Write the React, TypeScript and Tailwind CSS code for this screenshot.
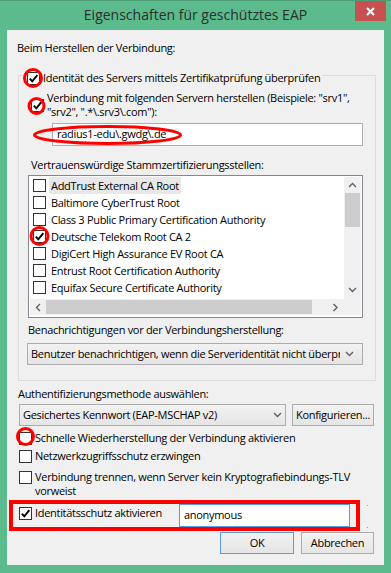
import React from "react";

function Check() {
  return (
    <svg width="11" height="11" viewBox="0 0 11 11">
      <path d="M1.8 5.6 L4.3 8.3 L9.3 2.2" fill="none" stroke="#000" strokeWidth="1.9" />
    </svg>
  );
}

function Box({ checked }: { checked?: boolean }) {
  return (
    <span className="flex h-[13px] w-[13px] shrink-0 items-center justify-center border border-[#333] bg-white">
      {checked ? <Check /> : null}
    </span>
  );
}

function Chevron({ dir }: { dir: "up" | "down" | "left" | "right" }) {
  const d =
    dir === "down"
      ? "M1 2 L4.5 5.5 L8 2"
      : dir === "up"
      ? "M1 6 L4.5 2.5 L8 6"
      : dir === "left"
      ? "M6 1 L2.5 4.5 L6 8"
      : "M2.5 1 L6 4.5 L2.5 8";
  return (
    <svg width="9" height="9" viewBox="0 0 9 9">
      <path d={d} fill="none" stroke="#606060" strokeWidth="1.4" />
    </svg>
  );
}

const certs = [
  "AddTrust External CA Root",
  "Baltimore CyberTrust Root",
  "Class 3 Public Primary Certification Authority",
  "Deutsche Telekom Root CA 2",
  "DigiCert High Assurance EV Root CA",
  "Entrust Root Certification Authority",
  "Equifax Secure Certificate Authority",
];

export default function App() {
  return (
    <div className="relative h-[573px] w-[391px] overflow-hidden bg-[#5bbb8c] font-['Open_Sans',sans-serif] text-[11px] tracking-[-0.3px] text-black">
      <div className="h-px bg-[#4b9c75]" />
      {/* title bar */}
      <div className="grid h-[29px] grid-cols-[1fr_auto_1fr] items-center">
        <div />
        <div className="pb-[1px] text-[14px] leading-[18px] tracking-normal text-[#2d2d2d]">
          Eigenschaften für geschütztes EAP
        </div>
        <div className="flex h-full items-start justify-end pr-[5px]">
          <div className="flex h-[20px] w-[31px] items-center justify-center bg-[#c75050]">
            <svg width="9" height="9" viewBox="0 0 9 9">
              <path d="M1 1 L8 8 M8 1 L1 8" stroke="#fff" strokeWidth="2" />
            </svg>
          </div>
        </div>
      </div>

      {/* client area */}
      <div className="ml-[7px] flex h-[535px] w-[377px] flex-col bg-[#f0f0f0]">
        <div className="ml-[10px] mt-[11px] h-[14px] leading-[14px]">Beim Herstellen der Verbindung:</div>

        {/* group box */}
        <div className="ml-[11px] mt-[20px] flex h-[306px] w-[358px] flex-col border border-[#dcdcdc]">
          <div className="-mt-[5px] ml-[6px] flex h-[14px] w-fit items-center gap-[3px] bg-[#f0f0f0] px-[2px]">
            <Box checked />
            <span className="whitespace-nowrap leading-[14px]">
              Identität des Servers mittels Zertifikatprüfung überprüfen
            </span>
          </div>

          <div className="ml-[12px] mt-[6px] flex items-center gap-[3px]">
            <Box checked />
            <span className="whitespace-nowrap leading-[14px]">
              Verbindung mit folgenden Servern herstellen (Beispiele: "srv1",
              <br />
              "srv2", ".*\.srv3\.com"):
            </span>
          </div>

          <div className="ml-[33px] mt-[4px] flex h-[23px] w-[311px] items-center border border-[#abadb3] bg-white pl-[4px]">
            radius1-edu\.gwdg\.de
          </div>

          <div className="ml-[12px] mt-[12px] h-[14px] leading-[14px]">
            Vertrauenswürdige Stammzertifizierungsstellen:
          </div>

          {/* list box */}
          <div className="ml-[9px] mt-[3px] h-[143px] w-[335px] border border-[#828790] bg-white px-px pb-[2px] pt-px">
            <div className="grid h-full grid-cols-[1fr_17px] grid-rows-[1fr_16px]">
              <div className="overflow-hidden">
                {certs.map((c, i) => (
                  <div key={c} className="flex h-[17px] items-center pl-[3px]">
                    <Box checked={i === 3} />
                    <span
                      className={
                        i === 0
                          ? "ml-[3px] whitespace-nowrap bg-[#e8e8e8] px-[2px] leading-[17px]"
                          : "ml-[3px] whitespace-nowrap px-[2px] leading-[17px]"
                      }
                    >
                      {c}
                    </span>
                  </div>
                ))}
              </div>
              <div className="flex flex-col bg-[#f0f0f0]">
                <div className="flex h-[16px] items-center justify-center">
                  <Chevron dir="up" />
                </div>
                <div className="mx-px h-[34px] bg-[#cdcdcd]" />
                <div className="flex-1" />
                <div className="flex h-[17px] items-center justify-center">
                  <Chevron dir="down" />
                </div>
              </div>
              <div className="flex bg-[#f0f0f0]">
                <div className="flex w-[16px] items-center justify-center">
                  <Chevron dir="left" />
                </div>
                <div className="my-px w-[266px] bg-[#cdcdcd]" />
                <div className="flex-1" />
                <div className="flex w-[17px] items-center justify-center">
                  <Chevron dir="right" />
                </div>
              </div>
              <div className="bg-[#f0f0f0]" />
            </div>
          </div>

          <div className="ml-[9px] mt-[5px] h-[14px] leading-[14px]">
            Benachrichtigungen vor der Verbindungsherstellung:
          </div>

          <div className="ml-[8px] mt-[6px] flex h-[22px] w-[336px] items-center border border-[#acacac] bg-linear-to-b from-[#f2f2f2] to-[#e5e5e5] pl-[3px]">
            <span className="w-[309px] shrink-0 overflow-hidden whitespace-nowrap">
              Benutzer benachrichtigen, wenn die Serveridentität nicht überprüft werden kann
            </span>
            <span className="flex flex-1 items-center justify-center pr-[4px]">
              <Chevron dir="down" />
            </span>
          </div>
        </div>

        <div className="ml-[11px] mt-[6px] h-[14px] leading-[14px]">Authentifizierungsmethode auswählen:</div>

        <div className="ml-[12px] mt-[3px] flex gap-[6px]">
          <div className="flex h-[22px] w-[267px] items-center border border-[#acacac] bg-linear-to-b from-[#f2f2f2] to-[#e5e5e5] pl-[3px]">
            <span className="flex-1 overflow-hidden whitespace-nowrap">Gesichertes Kennwort (EAP-MSCHAP v2)</span>
            <span className="flex w-[16px] shrink-0 items-center justify-center">
              <Chevron dir="down" />
            </span>
          </div>
          <div className="flex h-[22px] w-[82px] items-center justify-center border border-[#acacac] bg-linear-to-b from-[#f2f2f2] to-[#e5e5e5]">
            Konfigurieren...
          </div>
        </div>

        <div className="ml-[12px] mt-[5px] flex h-[14px] items-center gap-[3px]">
          <Box />
          <span className="whitespace-nowrap leading-[14px]">Schnelle Wiederherstellung der Verbindung aktivieren</span>
        </div>

        <div className="ml-[12px] mt-[4px] flex h-[14px] items-center gap-[3px]">
          <Box />
          <span className="whitespace-nowrap leading-[14px]">Netzwerkzugriffsschutz erzwingen</span>
        </div>

        <div className="ml-[12px] mt-[7px] flex items-start gap-[3px]">
          <span className="mt-px">
            <Box />
          </span>
          <span className="whitespace-nowrap leading-[14px]">
            Verbindung trennen, wenn Server kein Kryptografiebindungs-TLV
            <br />
            vorweist
          </span>
        </div>

        <div className="ml-[12px] mt-[6px] flex items-start">
          <div className="mt-[2px] flex h-[14px] w-[160px] items-center gap-[3px]">
            <Box checked />
            <span className="whitespace-nowrap leading-[14px]">Identitätsschutz aktivieren</span>
          </div>
          <div className="flex h-[23px] w-[171px] items-center border border-[#569de5] bg-white pl-[4px]">
            anonymous
          </div>
        </div>

        <div className="mt-[5px] flex justify-end gap-[7px] pr-[10px]">
          <div className="flex h-[22px] w-[74px] items-center justify-center border border-[#569de5] bg-linear-to-b from-[#f2f2f2] to-[#e5e5e5]">
            OK
          </div>
          <div className="flex h-[22px] w-[73px] items-center justify-center border border-[#acacac] bg-linear-to-b from-[#f2f2f2] to-[#e5e5e5]">
            Abbrechen
          </div>
        </div>
      </div>

      {/* red annotations overlay */}
      <svg className="pointer-events-none absolute left-0 top-0" width="391" height="573" viewBox="0 0 391 573">
        <g fill="none" stroke="#ff0000" strokeWidth="3">
          <circle cx="33" cy="78" r="8.5" />
          <circle cx="36.5" cy="106" r="7.5" />
          <ellipse cx="107.5" cy="135" rx="73" ry="8.5" />
          <circle cx="39.5" cy="236" r="8.5" />
          <circle cx="25.5" cy="436.5" r="8" />
        </g>
        <rect x="11" y="502" width="347" height="27" fill="none" stroke="#ff0000" strokeWidth="4" />
        <rect x="367" y="505" width="1" height="1" fill="#a0a0a0" />
        <rect x="367" y="527" width="1" height="1" fill="#a0a0a0" />
      </svg>
    </div>
  );
}
